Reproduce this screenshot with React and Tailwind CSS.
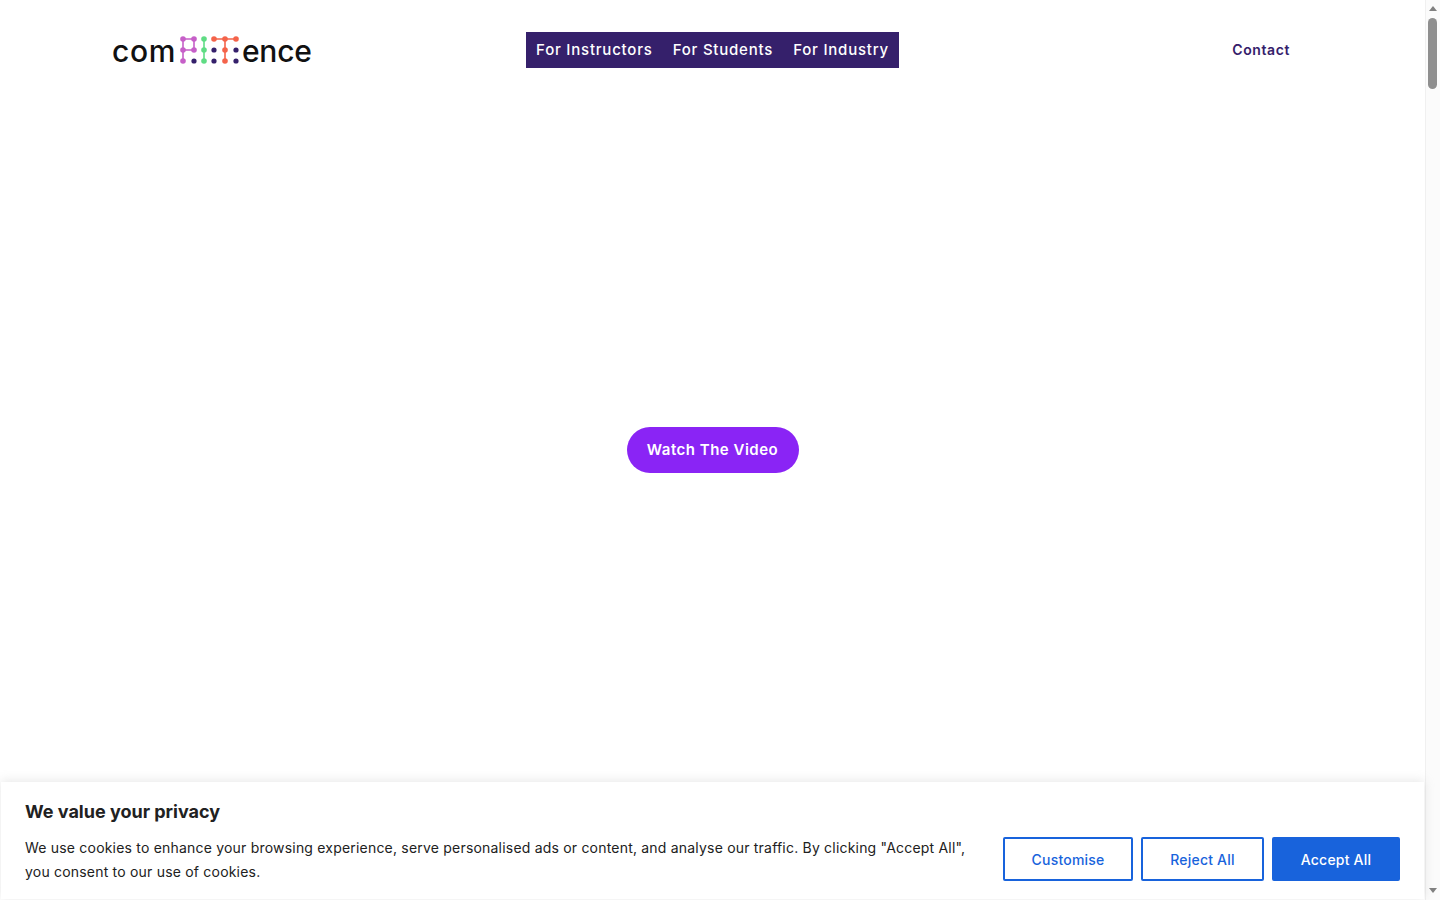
const font = "font-['Inter','Liberation_Sans',sans-serif]";

function LogoMark() {
    const purple = "#c65fc8", green = "#5fdc84", orange = "#f4634a", navy = "#35206b";
    return (
        <svg width="60" height="30" viewBox="0 0 60 30" className="ml-[3px] mr-[3px]">
            <path d="M4 4H15V15H4M4 4V26" fill="none" stroke={purple} strokeWidth="1.6" />
            <path d="M25 4V26" fill="none" stroke={green} strokeWidth="1.6" />
            <path d="M35 4H57M46 4V26" fill="none" stroke={orange} strokeWidth="1.6" />
            {[[4, 4], [15, 4], [4, 15], [15, 15], [4, 26]].map(([x, y]) => <circle key={`p${x}${y}`} cx={x} cy={y} r="2.8" fill={purple} />)}
            {[[25, 4], [25, 15], [25, 26]].map(([x, y]) => <circle key={`g${y}`} cx={x} cy={y} r="2.8" fill={green} />)}
            {[[35, 4], [46, 4], [57, 4], [46, 15], [46, 26]].map(([x, y]) => <circle key={`o${x}${y}`} cx={x} cy={y} r="2.8" fill={orange} />)}
            {[[15, 26], [35, 15], [35, 26], [57, 15], [57, 26]].map(([x, y]) => <circle key={`n${x}${y}`} cx={x} cy={y} r="2.6" fill={navy} />)}
        </svg>
    );
}

function Logo() {
    return (
        <div className="-ml-[1px] flex h-9 items-center text-[30px] font-medium leading-none text-[#111] font-['Inter',sans-serif]">
            <span className="mt-[2px] tracking-[0.6px]">com</span>
            <LogoMark />
            <span className="mt-[2px] tracking-[-0.2px]">ence</span>
        </div>
    );
}

function Scrollbar() {
    return (
        <aside className="flex w-[15px] flex-col items-center border-l border-[#f0f0f0] bg-[#fbfbfb] pr-[1px]">
            <div className="mt-[6px] h-0 w-0 border-x-[4.5px] border-b-[5px] border-x-transparent border-b-[#808080]" />
            <div className="mt-[7px] h-[71px] w-[9px] rounded-[4.5px] bg-[#8f8f8f]" />
            <div className="mt-auto mb-[7px] h-0 w-0 border-x-[4.5px] border-t-[5px] border-x-transparent border-t-[#808080]" />
        </aside>
    );
}

export default function App() {
    return (
        <div className={`${font} flex h-screen overflow-hidden bg-white`}>
            <div className="relative flex-1">
                <header className="grid grid-cols-[1fr_auto_1fr] items-center px-[113px] pt-8">
                    <Logo />
                    <nav className="flex h-9 items-center bg-[#35206b] text-[15px] font-medium tracking-[0.78px] text-white">
                        <a className="px-[10px]">For Instructors</a>
                        <a className="px-[10px]">For Students</a>
                        <a className="px-[10px]">For Industry</a>
                    </nav>
                    <a className="-mt-[1px] justify-self-end pr-[22px] text-[14px] font-semibold tracking-[0.6px] text-[#35206b]">Contact</a>
                </header>
                <main className="flex justify-center pt-[359px]">
                    <button className="h-[46px] w-[172px] rounded-[23px] bg-[#8a24f5] text-[15px] font-semibold tracking-[0.5px] text-white">
                        Watch The Video
                    </button>
                </main>
                <div className="absolute bottom-[1px] left-[1px] right-[1px] h-[117px] bg-white px-6 pt-[18px] shadow-[0_-1px_10px_0_rgba(172,171,171,0.3)]">
                    <p className="text-[18px] font-bold leading-[24px] text-[#212121]">We value your privacy</p>
                    <div className="mt-[12px] flex items-start justify-between">
                        <p className="w-[960px] text-[14px] leading-[24px] tracking-[0.2px] text-[#212121]">
                            We use cookies to enhance your browsing experience, serve personalised ads or content, and analyse our traffic. By clicking "Accept All", you consent to our use of cookies.
                        </p>
                        <div className="mt-[1px] flex gap-2 text-[14px] font-medium tracking-[0.2px]">
                            <button className="h-11 w-[130px] rounded-[2px] border-2 border-[#1863dc] text-[#1863dc]">Customise</button>
                            <button className="h-11 w-[123px] rounded-[2px] border-2 border-[#1863dc] text-[#1863dc]">Reject All</button>
                            <button className="h-11 w-[128px] rounded-[2px] border-2 border-[#1863dc] bg-[#1863dc] text-white">Accept All</button>
                        </div>
                    </div>
                </div>
            </div>
            <Scrollbar />
        </div>
    );
}
